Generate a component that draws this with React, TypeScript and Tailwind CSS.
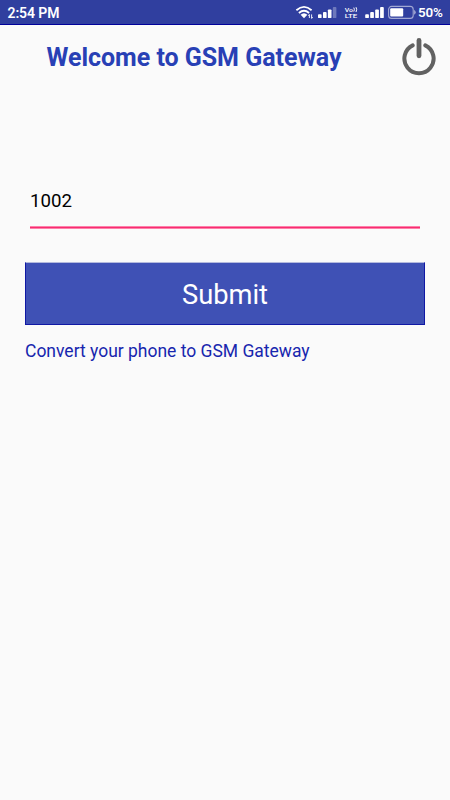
import React, { useState } from "react";

function StatusIcons() {
  return (
    <svg width="126" height="24" viewBox="290 0 126 24" className="block shrink-0" fill="none">
      <g stroke="#fff" strokeWidth="1.8">
        <path d="M296.4 10.2Q304 3.6 311.6 10.2" />
        <path d="M298.9 13Q304 8.6 309.1 13" />
      </g>
      <path d="M300.6 14.8Q304 11.8 307.4 14.8L304 18.2Z" fill="#fff" />
      <path d="M309.4 18V14.6M308.4 15.8L309.4 14.4M311.6 14.4V18.2M312.6 17L311.6 18.6" stroke="#fff" strokeWidth="0.9" />
      <g fill="#fff">
        <rect x="318" y="14.2" width="3.6" height="3.9" rx="0.9" />
        <rect x="323" y="12" width="3.6" height="6.1" rx="0.9" />
        <rect x="327.9" y="9.4" width="3.6" height="8.7" rx="0.9" />
        <rect x="332.8" y="7" width="3.6" height="11.1" rx="0.9" opacity="0.3" />
        <rect x="365.2" y="14.2" width="3.7" height="3.9" rx="0.9" />
        <rect x="370.2" y="12" width="3.7" height="6.1" rx="0.9" />
        <rect x="375.2" y="9.4" width="3.7" height="8.7" rx="0.9" />
        <rect x="380.1" y="7" width="3.7" height="11.1" rx="0.9" />
        <rect x="390.2" y="8.2" width="13" height="8.2" rx="1" />
        <path d="M414 9.8Q415.8 10.8 415.8 12.3T414 14.8Z" opacity="0.5" />
      </g>
      <rect x="388.6" y="6.4" width="24.6" height="12" rx="3" stroke="#fff" strokeOpacity="0.55" strokeWidth="1.1" />
      <path d="M353.8 7.6Q354.9 9.4 353.8 11.6M356 7.2Q357.4 9.4 356 12" stroke="#fff" strokeWidth="1" />
      <g fill="#fff" fontFamily="Roboto, sans-serif" fontWeight="500">
        <text x="344.8" y="12" fontSize="6" textLength="8.2" lengthAdjust="spacingAndGlyphs">Vo</text>
        <text x="344.8" y="18.1" fontSize="6" textLength="12.4" lengthAdjust="spacingAndGlyphs">LTE</text>
      </g>
    </svg>
  );
}

export default function App() {
  const [port, setPort] = useState("1002");
  return (
    <div className="flex h-[800px] w-[450px] flex-col overflow-hidden bg-[#fafafa] font-['Roboto',sans-serif]">
      <header className="flex h-[25px] shrink-0 items-center border-b border-[#00009a] bg-[#303f9f] text-white">
        <span className="ml-[7.5px] pt-[2px] text-[14px] leading-6 font-semibold tracking-[-0.1px]">2:54 PM</span>
        <div className="ml-auto flex w-[160px] items-center">
          <StatusIcons />
          <span className="ml-[2px] pt-[1px] text-[13.4px] leading-6 font-semibold tracking-[-0.1px]">50%</span>
        </div>
      </header>
      <div className="flex h-[65px] shrink-0 items-center justify-between pr-[14px] pl-[46.5px]">
        <h1 className="text-[25px] leading-[30px] font-bold tracking-[-0.03px] whitespace-nowrap text-[#2840b5]">Welcome to GSM Gateway</h1>
        <button aria-label="Power" className="h-[40px] w-[34px]">
          <svg width="34" height="40" viewBox="402 38 34 40" fill="none" stroke="#616161" strokeLinecap="round">
            <path d="M412.7 45.4A14.6 14.6 0 1 0 425.3 45.4" strokeWidth="4" />
            <path d="M419 40.4V55.8" strokeWidth="4.8" />
          </svg>
        </button>
      </div>
      <main className="flex flex-col px-[25px] pt-[84px]">
        <div className="mx-[5px] flex h-[55px] flex-col">
          <input
            aria-label="Port"
            value={port}
            onChange={(e) => setPort(e.target.value)}
            className="h-[52px] w-full pt-px text-[18.7px] text-black outline-none"
          />
          <div className="h-[3px] border-y border-[#fd80aa] bg-[#f82c70]" />
        </div>
        <button className="mt-[33px] h-[63px] border border-[#1018a4] border-t-[#b4bade] bg-[#3f51b5] pt-[3px] text-[27.3px] text-white">Submit</button>
        <p className="mt-[15px] pt-px text-[17.5px] leading-[21px] tracking-[-0.01px] whitespace-nowrap text-[#1726ae]">Convert your phone to GSM Gateway</p>
      </main>
    </div>
  );
}
